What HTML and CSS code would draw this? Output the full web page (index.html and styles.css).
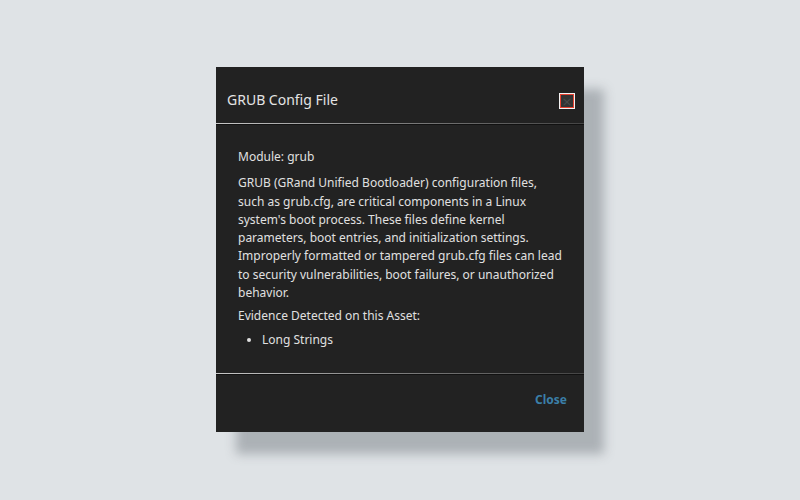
FILE: index.html
```html
<!DOCTYPE html>
<html>
<head>
<meta charset="utf-8">
<link rel="stylesheet" href="styles.css">
</head>
<body>
<div class="stage">
  <div class="modal">
    <div class="modal-header">
      <div class="modal-title">GRUB Config File</div>
      <span class="close-x" aria-label="Close"><span class="close-inner">×</span></span>
    </div>
    <div class="divider"></div>
    <div class="modal-body">
      <p class="module">Module: grub</p>
      <p class="desc">GRUB (GRand Unified Bootloader) configuration files, such as grub.cfg, are critical components in a Linux system's boot process. These files define kernel parameters, boot entries, and initialization settings. Improperly formatted or tampered grub.cfg files can lead to security vulnerabilities, boot failures, or unauthorized behavior.</p>
      <p class="evidence">Evidence Detected on this Asset:</p>
      <ul class="list">
        <li>Long Strings</li>
      </ul>
    </div>
    <div class="divider"></div>
    <div class="modal-footer">
      <a class="close-link" href="#">Close</a>
    </div>
  </div>
</div>
</body>
</html>
```

FILE: styles.css
```css
html, body {
  margin: 0;
  padding: 0;
  background: #dfe3e6;
  font-family: "Noto Sans", "Open Sans", sans-serif;
}
body {
  min-height: 500px;
}
.stage {
  padding-top: 67px;
  padding-left: 216px;
  padding-bottom: 68px;
}
.modal {
  width: 368px;
  height: 365px;
  background: #222222;
  box-shadow: 20px 22px 10px rgba(110, 118, 124, 0.45);
  display: flex;
  flex-direction: column;
}
.modal-header {
  height: 56px;
  display: flex;
  align-items: center;
  justify-content: space-between;
  padding: 0 9px 0 11px;
}
.modal-title {
  color: #e4e4e4;
  font-size: 14px;
  margin-top: 9px;
}
.close-x {
  display: block;
  width: 16px;
  height: 16px;
  margin-top: 12px;
  box-sizing: border-box;
  border: 1px solid #f2f2f2;
}
.close-inner {
  display: flex;
  align-items: center;
  justify-content: center;
  width: 100%;
  height: 100%;
  box-sizing: border-box;
  border: 1px solid #e4402f;
  background: #333333;
  color: #4a4a4a;
  font-size: 13px;
  line-height: 1;
  font-family: "DejaVu Sans", sans-serif;
}
.divider {
  height: 2px;
  background:
    linear-gradient(to right, #c8c8c8 0%, #888 40%, #444 100%) top / 100% 1px no-repeat,
    #111;
}
.modal-body {
  flex: 1;
  padding: 23px 22px 0 22px;
  color: #e0e0e0;
  font-size: 12px;
  line-height: 18.3px;
}
.modal-body p {
  margin: 0;
}
.module {
  margin-bottom: 8px !important;
}
.desc {
  margin-bottom: 5px !important;
}
.evidence {
  margin-bottom: 5px !important;
}
.list {
  margin: 0;
  padding-left: 24px;
}
.modal-footer {
  height: 57px;
  display: flex;
  align-items: center;
  justify-content: flex-end;
  padding: 0 17px 8px;
  box-sizing: border-box;
}
.close-link {
  color: #3b7fa8;
  font-weight: bold;
  font-size: 12px;
  text-decoration: none;
}
```
